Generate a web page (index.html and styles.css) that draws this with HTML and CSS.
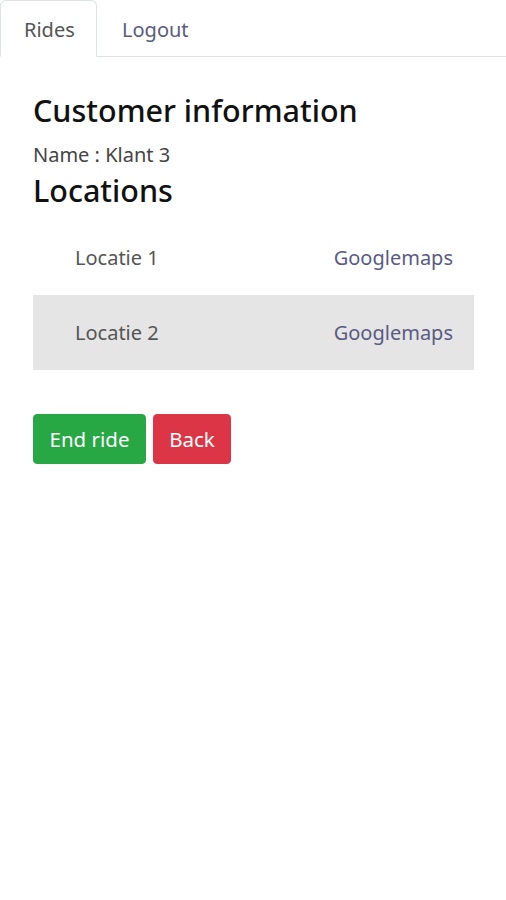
FILE: index.html
```html
<!DOCTYPE html>
<html>
<head>
<meta charset="utf-8">
<link rel="stylesheet" href="styles.css">
</head>
<body>
<nav class="tabs">
  <a class="tab active">Rides</a>
  <a class="tab">Logout</a>
</nav>
<main class="content">
  <h3 class="title">Customer information</h3>
  <p class="name">Name : Klant 3</p>
  <h3 class="title loc">Locations</h3>
  <div class="table">
    <div class="row"><span class="cell">Locatie 1</span><a class="link">Googlemaps</a></div>
    <div class="row alt"><span class="cell">Locatie 2</span><a class="link">Googlemaps</a></div>
  </div>
  <div class="actions">
    <button class="btn green">End ride</button>
    <button class="btn red">Back</button>
  </div>
</main>
</body>
</html>
```
FILE: styles.css
```css
* { box-sizing: border-box; }
body {
  margin: 0;
  font-family: "Noto Sans", "Open Sans", sans-serif;
  color: #212529;
  background: #fff;
}
.tabs {
  display: flex;
  border-bottom: 1px solid #dee2e6;
  height: 57px;
}
.tab {
  display: flex;
  align-items: center;
  padding: 2px 0 0 24px;
  font-size: 20px;
  color: #5a5a7e;
  margin-bottom: -1px;
  border: 1px solid transparent;
  border-radius: 6px 6px 0 0;
}
.tab.active {
  color: #555;
  border-color: #dee2e6 #dee2e6 #fff;
  background: #fff;
  width: 97px;
  padding: 2px 0 0 23px;
}
.content {
  padding: 35px 32px 0 33px;
}
.title {
  margin: 0;
  font-size: 30.5px;
  font-weight: 500;
  line-height: 36px;
  color: #111;
}
.name {
  margin: 15px 0 0;
  font-size: 20px;
  line-height: 24px;
  color: #444;
}
.loc { margin-top: 5px; }
.table {
  margin-top: 12px;
}
.row {
  display: flex;
  justify-content: space-between;
  align-items: center;
  height: 75px;
  padding: 0 21px 0 42px;
  font-size: 20px;
}
.row.alt { background: #e5e5e5; }
.cell { color: #555; }
.link { color: #5a5a82; }
.actions {
  display: flex;
  gap: 7px;
  margin-top: 44px;
}
.btn {
  height: 50px;
  border: 1px solid;
  border-radius: 4px;
  font-family: inherit;
  font-size: 20.5px;
  color: #fff;
  padding: 0;
}
.green { background: #28a745; border-color: #28a745; width: 113px; }
.red { background: #dc3545; border-color: #dc3545; width: 78px; }
```
